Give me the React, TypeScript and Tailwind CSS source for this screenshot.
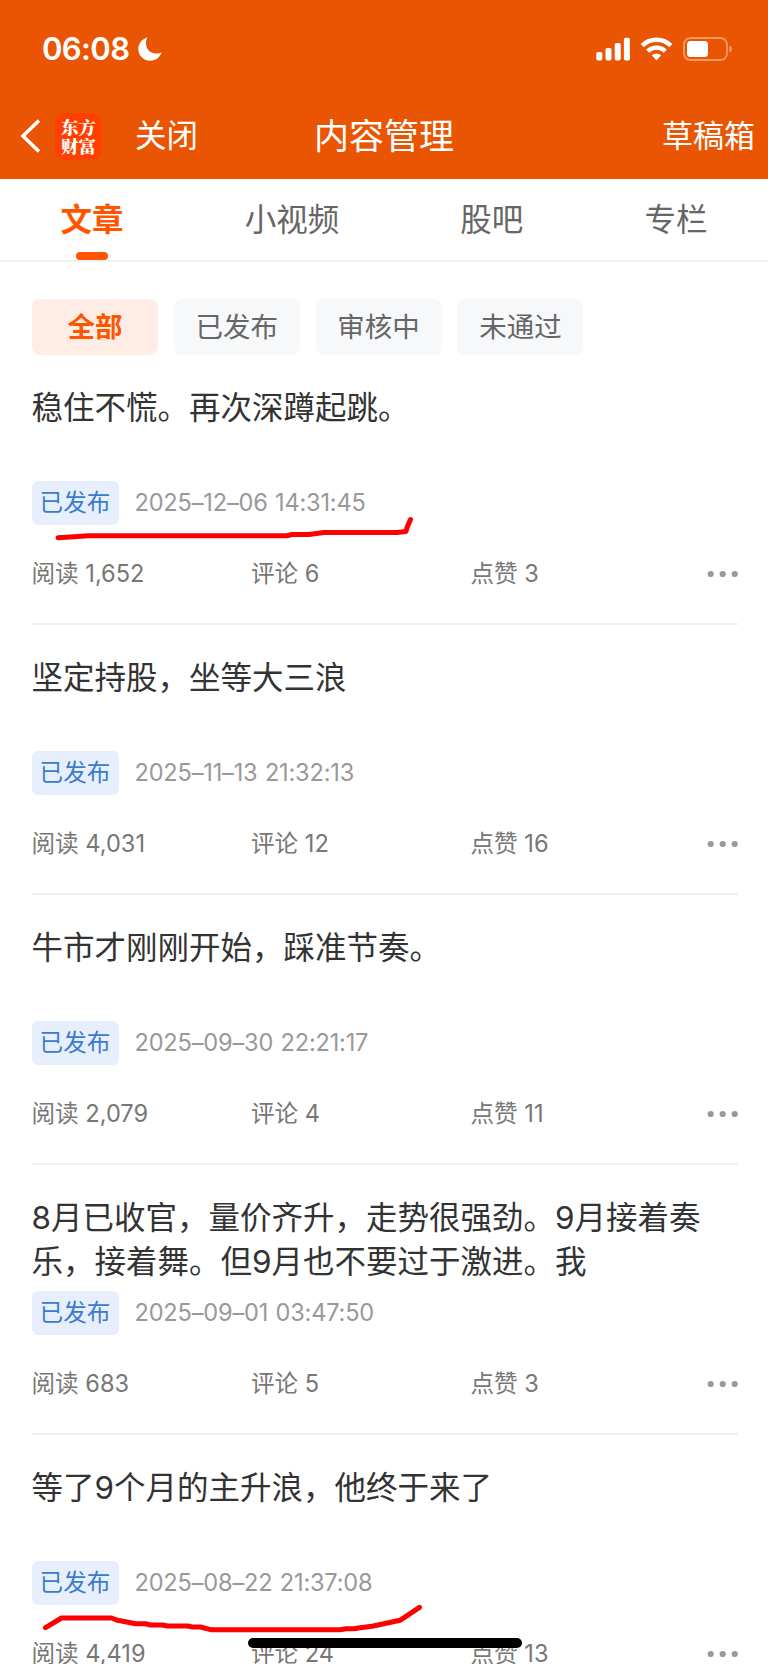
import clsx from 'clsx'

interface Article {
  id: number
  title: string
  date: string
  reads: string
  comments: number
  likes: number
}

const tabs = ['文章', '小视频', '股吧', '专栏']
const filters = ['全部', '已发布', '审核中', '未通过']

const articles: Article[] = [
  {
    id: 1,
    title: '稳住不慌。再次深蹲起跳。',
    date: '2025–12–06 14:31:45',
    reads: '1,652',
    comments: 6,
    likes: 3,
  },
  {
    id: 2,
    title: '坚定持股，坐等大三浪',
    date: '2025–11–13 21:32:13',
    reads: '4,031',
    comments: 12,
    likes: 16,
  },
  {
    id: 3,
    title: '牛市才刚刚开始，踩准节奏。',
    date: '2025–09–30 22:21:17',
    reads: '2,079',
    comments: 4,
    likes: 11,
  },
  {
    id: 4,
    title:
      '8月已收官，量价齐升，走势很强劲。9月接着奏乐，接着舞。但9月也不要过于激进。我',
    date: '2025–09–01 03:47:50',
    reads: '683',
    comments: 5,
    likes: 3,
  },
  {
    id: 5,
    title: '等了9个月的主升浪，他终于来了',
    date: '2025–08–22 21:37:08',
    reads: '4,419',
    comments: 24,
    likes: 13,
  },
]

function StatusBar() {
  return (
    <div className="flex h-[97px] items-center justify-between pr-[35px] pl-[42px]">
      <div className="flex items-center gap-[9px]">
        <span className="text-[31px] leading-none font-semibold tracking-[-0.6px]">
          06:08
        </span>
        <svg width="24" height="24" viewBox="0 0 24 24" fill="currentColor">
          <path d="M9.3 0.4C4 1.8 0.3 6.5 0.3 12c0 6.600 5.400 11.800 12 11.800 5.200 0 9.700-3.300 11.300-8.200-1.600 0.700-3.300 1-5 1C12.500 16.600 8 12.200 8 6.200c0-2 0.400-4 1.300-5.800z" />
        </svg>
      </div>
      <div className="flex items-center">
        <svg width="35" height="24" viewBox="0 0 35 24" fill="currentColor">
          <rect x="0.300" y="15" width="6" height="8.500" rx="1.800" />
          <rect x="9.500" y="11" width="6" height="12.500" rx="1.800" />
          <rect x="18.700" y="6" width="6" height="17.500" rx="1.800" />
          <rect x="27.900" y="0.700" width="6" height="22.800" rx="1.800" />
        </svg>
        <svg
          className="ml-[9px]"
          width="33"
          height="24"
          viewBox="0 0 33 24"
          fill="none"
          stroke="currentColor"
          strokeWidth="4.400"
        >
          <path d="M2.200 8.600a20.500 20.500 0 0 1 28.600 0" />
          <path d="M7.700 14.200a12.600 12.600 0 0 1 17.600 0" />
          <path
            d="M11.800 18.200a7.200 7.200 0 0 1 9.400 0l-4.700 5.300z"
            fill="currentColor"
            stroke="none"
          />
        </svg>
        <svg
          className="ml-[10px]"
          width="50"
          height="24"
          viewBox="0 0 50 24"
          fill="currentColor"
        >
          <rect
            x="1"
            y="1"
            width="43"
            height="22"
            rx="6.500"
            fill="none"
            stroke="currentColor"
            strokeWidth="1.800"
            opacity="0.4"
          />
          <path d="M46.500 8.500c3.200 1.200 3.200 5.800 0 7z" opacity="0.45" />
          <rect x="4" y="4" width="21" height="16" rx="3.500" />
        </svg>
      </div>
    </div>
  )
}

function NavBar() {
  return (
    <div className="grid h-[78px] grid-cols-[1fr_auto_1fr] items-center pr-[13px] pl-[20px]">
      <div className="flex items-center">
        <svg
          width="22"
          height="36"
          viewBox="0 0 22 36"
          fill="none"
          stroke="currentColor"
          strokeWidth="3.600"
        >
          <path d="M19 2.500 3 18l16 15.500" />
        </svg>
        <div className="ml-[13px] flex h-[47px] w-[47px] flex-col items-center justify-center rounded-[9px] bg-[#ff4000] font-['Noto_Serif_CJK_SC','Noto_Sans_CJK_SC',serif] text-[17.500px] leading-[19.500px] font-black">
          <span>东方</span>
          <span>财富</span>
        </div>
        <span className="ml-[33px] text-[31.500px]">关闭</span>
      </div>
      <h1 className="-ml-[7px] text-[35px]">内容管理</h1>
      <span className="justify-self-end text-[31px]">草稿箱</span>
    </div>
  )
}

function Tabs() {
  return (
    <nav className="flex h-[83px] justify-around border-b-2 border-[#f0f0f0] text-[31.500px] text-[#666]">
      {tabs.map((tab, i) => (
        <div
          key={tab}
          className={clsx(
            'relative flex h-[81px] items-center',
            i === 0 && 'font-bold text-[#ff5500]'
          )}
        >
          {tab}
          {i === 0 && (
            <span className="absolute bottom-0 left-1/2 h-2 w-8 -translate-x-1/2 rounded-full bg-[#ff5500]" />
          )}
        </div>
      ))}
    </nav>
  )
}

function Filters() {
  return (
    <div className="flex gap-[15.800px] px-[32px] pt-[37px]">
      {filters.map((filter, i) => (
        <button
          key={filter}
          className={clsx(
            'flex h-[56px] w-[126px] items-center justify-center rounded-lg pt-[2px] text-[27.500px]',
            i === 0
              ? 'bg-[#ffece5] font-bold text-[#ff5500]'
              : 'bg-[#f7f8fa] text-[#666]'
          )}
        >
          {filter}
        </button>
      ))}
    </div>
  )
}

function ArticleItem({ article }: { article: Article }) {
  return (
    <li className="mr-[30.500px] ml-[31.500px] h-[270px] shrink-0 border-b-2 border-[#f0f0f0] pt-[31px]">
      <h2 className="h-[87px] text-[31.500px] leading-[43.500px] text-[#333]">
        {article.title}
      </h2>
      <div className="mt-[8px] flex items-center">
        <span className="flex h-[44px] w-[87px] items-center justify-center rounded-md bg-[#e6effb] text-[23.600px] text-[#3a7bce]">
          已发布
        </span>
        <span className="ml-4 text-[23.600px] tracking-[-0.2px] text-[#999] [word-spacing:1px]">
          {article.date}
        </span>
      </div>
      <div className="mt-[31px] grid h-[36px] grid-cols-[219.500px_219.500px_1fr_auto] items-center text-[23.600px] text-[#777]">
        <span>阅读 {article.reads}</span>
        <span>评论 {article.comments}</span>
        <span>点赞 {article.likes}</span>
        <svg width="31" height="8" viewBox="0 0 31 8" fill="#999">
          <circle cx="3.700" cy="4" r="3.100" />
          <circle cx="15.700" cy="4" r="3.100" />
          <circle cx="27.700" cy="4" r="3.100" />
        </svg>
      </div>
    </li>
  )
}

// Red pen strokes drawn by hand over the list
function PenMarks() {
  return (
    <svg
      className="pointer-events-none absolute top-0 left-0"
      width="768"
      height="1664"
      viewBox="0 0 768 1664"
      fill="none"
      stroke="#ff0000"
      strokeWidth="5"
      strokeLinecap="round"
      strokeLinejoin="round"
    >
      <path d="M58 537.700 74 536.700 88 535.700H287l5-1.200h17l15-2H397l9-1 1-4 3.500-8" />
      <path d="M45.500 1627.700 61.500 1618h50l5 2 19 3.800h10l5 1.200h12l5 1h20l5 1h8l11 2.800H340l6-1h8l6-1 12-1.500 12-2.500 16-3.500 19.500-13" />
    </svg>
  )
}

export default function App() {
  return (
    <div className="relative h-[1664px] w-[768px] overflow-hidden bg-white font-['Inter','Noto_Sans_CJK_SC',sans-serif]">
      <header className="h-[179px] bg-[#ea5504] text-white">
        <StatusBar />
        <NavBar />
      </header>
      <Tabs />
      <Filters />
      <ul className="flex flex-col">
        {articles.map(article => (
          <ArticleItem key={article.id} article={article} />
        ))}
      </ul>
      <div className="absolute top-[1638px] left-[248px] h-[10px] w-[274px] rounded-full bg-black" />
      <PenMarks />
    </div>
  )
}
